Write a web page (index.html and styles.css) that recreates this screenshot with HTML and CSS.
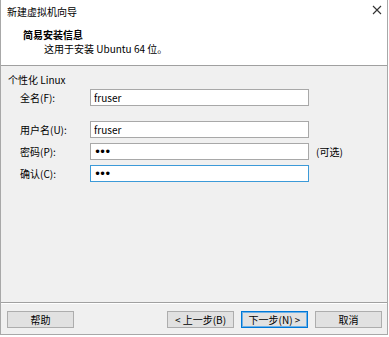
FILE: index.html
```html
<!DOCTYPE html>
<html lang="zh-CN">
<head>
  <meta charset="UTF-8">
  <title>新建虚拟机向导</title>
  <link rel="stylesheet" href="styles.css">
</head>
<body>
  <div class="window">
    <div class="titlebar">
      <span class="title">新建虚拟机向导</span>
      <svg class="close" width="10" height="10" viewBox="0 0 10 10">
        <path d="M1 1L9 9M9 1L1 9" stroke="#333" stroke-width="1.1" fill="none"/>
      </svg>
    </div>
    <div class="header">
      <div class="head-title">简易安装信息</div>
      <div class="head-sub">这用于安装 Ubuntu 64 位。</div>
    </div>

    <div class="content">
      <div class="group-title">个性化 Linux</div>
      <div class="row first">
        <label for="fullname">全名(F):</label>
        <input type="text" id="fullname" value="fruser">
      </div>
      <div class="row spaced">
        <label for="username">用户名(U):</label>
        <input type="text" id="username" value="fruser">
      </div>
      <div class="row">
        <label for="password">密码(P):</label>
        <input type="password" id="password" value="abc">
        <span class="hint">(可选)</span>
      </div>
      <div class="row">
        <label for="confirm">确认(C):</label>
        <input type="password" id="confirm" class="focused" value="abc" autofocus>
      </div>
    </div>

    <div class="footer">
      <button class="btn">帮助</button>
      <div class="spacer"></div>
      <button class="btn">&lt; 上一步(B)</button>
      <button class="btn default">下一步(N) &gt;</button>
      <button class="btn">取消</button>
    </div>
  </div>
</body>
</html>
```

FILE: styles.css
```css
html, body {
  margin: 0;
  padding: 0;
  background: #ffffff;
}
body {
  font-family: "Noto Sans CJK SC", "Noto Sans", sans-serif;
  font-size: 10px;
  color: #000;
}
.window {
  width: 388px;
  height: 335px;
  box-sizing: border-box;
  border: 1px solid #a8a8a8;
  border-top: none;
  display: flex;
  flex-direction: column;
  background: #f0f0f0;
}
.titlebar {
  height: 24px;
  background: #fff;
  display: flex;
  align-items: center;
  justify-content: space-between;
  padding: 0 5px 0 6px;
  box-sizing: border-box;
}
.title {
  line-height: 14px;
}
.close {
  margin-top: -4px;
}
.header {
  height: 42px;
  box-sizing: border-box;
  background: #fff;
  border-bottom: 1px solid #a0a0a0;
  padding: 4px 0 0 22px;
  line-height: 14px;
}
.head-title {
  font-weight: bold;
}
.head-sub {
  padding-left: 21px;
}
.content {
  flex: 1;
  padding: 7px 0 0 7px;
}
.group-title {
  line-height: 14px;
}
.row {
  display: flex;
  align-items: center;
  height: 17px;
  margin-top: 5px;
  padding-left: 12px;
}
.row.first {
  margin-top: 2px;
}
.row.spaced {
  margin-top: 15px;
}
.row label {
  width: 70px;
}
.row input {
  width: 219px;
  height: 17px;
  box-sizing: border-box;
  border: 1px solid #a8a8a8;
  background: #fff;
  padding: 0 3px;
  font-family: inherit;
  font-size: 10px;
  outline: none;
}
.row input[type="password"] {
  font-family: "DejaVu Sans", sans-serif;
  font-size: 12px;
  letter-spacing: -2px;
  caret-color: #000;
}
.row input.focused {
  border-color: #3c9ad8;
}
.hint {
  margin-left: 7px;
}
.footer {
  height: 32px;
  box-sizing: border-box;
  border-top: 1px solid #a0a0a0;
  box-shadow: inset 0 1px 0 #fff;
  display: flex;
  gap: 7px;
  padding: 8px 5px 0 6px;
}
.spacer {
  flex: 1;
}
.btn {
  width: 67px;
  height: 17px;
  box-sizing: border-box;
  border: 1px solid #adadad;
  background: #e1e1e1;
  font-family: inherit;
  font-size: 10px;
  padding: 0;
  color: #000;
}
.btn.default {
  border-color: #0078d7;
  box-shadow: inset 0 0 0 1px #6fb1e6;
}
```
